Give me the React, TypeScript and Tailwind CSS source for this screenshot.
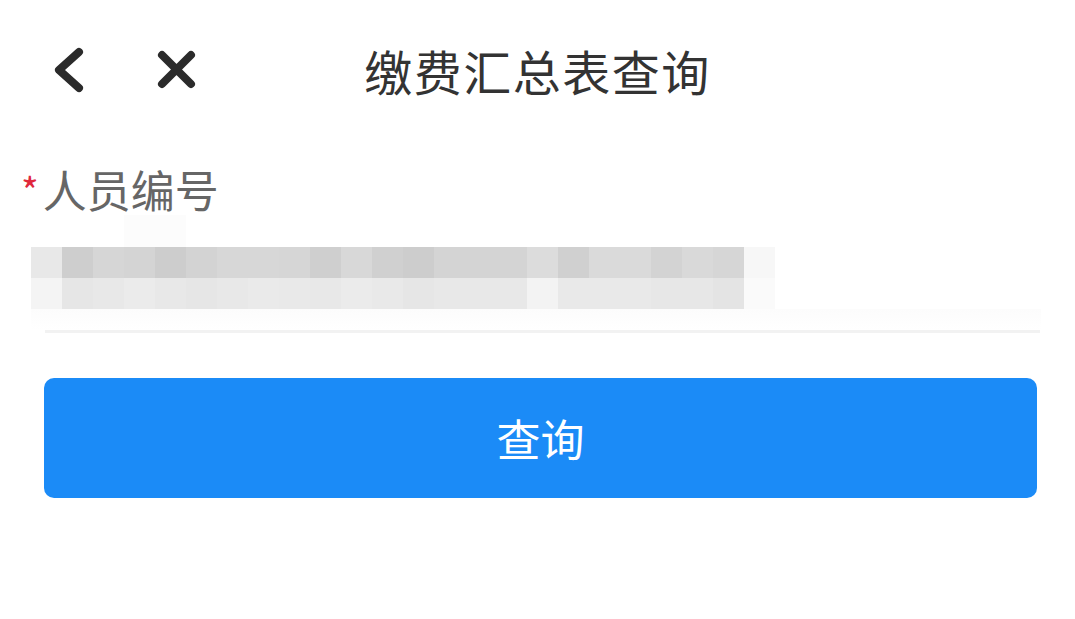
const row1 = [
  "#e8e8e8", "#cecece", "#d6d6d6", "#d4d4d4", "#cdcdcd", "#d3d3d3", "#d7d7d7", "#d7d7d7",
  "#d6d6d6", "#cfcfcf", "#d8d8d8", "#d0d0d0", "#cdcdcd", "#d4d4d4", "#d4d4d4", "#d4d4d4",
  "#dcdcdc", "#d0d0d0", "#dadada", "#dadada", "#d3d3d3", "#d9d9d9", "#d6d6d6", "#f7f7f7",
];
const row2 = [
  "#f4f4f4", "#e6e6e6", "#e8e8e8", "#ebebeb", "#e8e8e8", "#e6e6e6", "#e8e8e8", "#eaeaea",
  "#e9e9e9", "#e8e8e8", "#ebebeb", "#e9e9e9", "#e6e6e6", "#e8e8e8", "#e8e8e8", "#e8e8e8",
  "#f3f3f3", "#e9e9e9", "#e9e9e9", "#e9e9e9", "#e7e7e7", "#e7e7e7", "#e4e4e4", "#fafafa",
];

function Mosaic() {
  return (
    <div className="ml-[31px] grid grid-cols-[repeat(24,31px)] grid-rows-[31px_31px]">
      {[...row1, ...row2].map((c, i) => (
        <div key={i} style={{ backgroundColor: c }} />
      ))}
    </div>
  );
}

export default function App() {
  return (
    <div className="w-[1075px] h-[619px] bg-white overflow-hidden font-['Noto_Sans_CJK_SC',sans-serif]">
      {/* header */}
      <div className="relative h-[140px] flex items-center justify-center">
        <div className="absolute left-[50px] top-[44px] flex items-center gap-[62px]">
          <svg width="40" height="52" viewBox="0 0 40 52" fill="none">
            <polyline
              points="29,8 9,26 29,44"
              stroke="#2b2b2b"
              strokeWidth="8"
              strokeLinecap="round"
              strokeLinejoin="round"
            />
          </svg>
          <svg width="50" height="50" viewBox="0 0 50 50" fill="none">
            <path
              d="M10 10 L39 39 M39 10 L10 39"
              stroke="#2b2b2b"
              strokeWidth="8"
              strokeLinecap="round"
            />
          </svg>
        </div>
        <h1 className="text-[48px] leading-none text-[#333333] tracking-[1.5px]">缴费汇总表查询</h1>
      </div>

      {/* field */}
      <div className="pt-[27px]">
        <div className="flex items-start pl-[21px]">
          <span className="text-[38px] leading-none text-[#e0283c] mt-[4px]">*</span>
          <span className="ml-[4px] text-[44px] leading-none text-[#666666]">人员编号</span>
        </div>
        <div className="relative mt-[36px]">
          <div className="absolute left-[124px] top-[-32px] w-[62px] h-[32px] bg-[#fcfcfc]" />
          <Mosaic />
          <div className="ml-[31px] h-[21px] w-[1010px] bg-gradient-to-b from-[#fcfcfc] to-white" />
        </div>
        <div className="ml-[45px] mr-[35px] h-[3px] bg-[#f2f2f2]" />
      </div>

      {/* button */}
      <div className="px-[44px] mt-[45px] pr-[38px]">
        <button className="w-full h-[120px] rounded-[10px] bg-[#1b8bf7] text-white text-[44px] leading-none">
          查询
        </button>
      </div>
    </div>
  );
}
